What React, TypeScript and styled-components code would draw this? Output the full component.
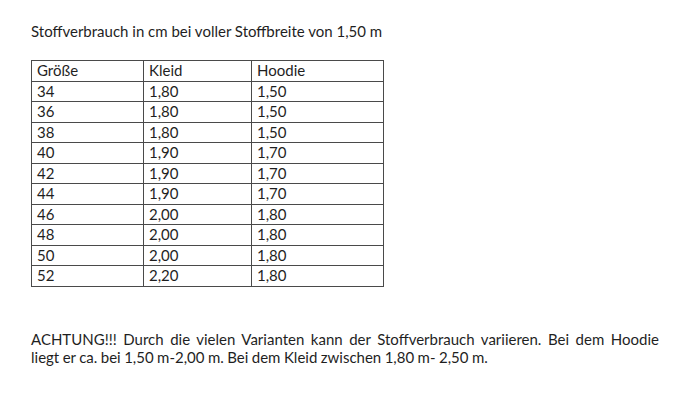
import React from 'react';
import styled, { createGlobalStyle } from 'styled-components';

const GlobalStyle = createGlobalStyle`
    html, body {
        margin: 0;
        padding: 0;
        background: #ffffff;
    }
`;

const Page = styled.div`
    width: 680px;
    height: 409px;
    box-sizing: border-box;
    padding: 22px 0 0 31px;
    font-family: Lato, "Noto Sans", sans-serif;
    font-size: 15px;
    line-height: 19px;
    color: #1f1f1f;
`;

const Title = styled.div`
    margin: 0 0 19px 0;
`;

const Table = styled.table`
    border-collapse: collapse;
    width: 352px;
    table-layout: fixed;
`;

const Col = styled.col<{ $width: number }>`
    width: ${p => p.$width}px;
`;

const Cell = styled.td`
    border: 1px solid #4a4a4a;
    padding: 0 0 0 5px;
    height: 19.5px;
    line-height: 19px;
    text-align: left;
    vertical-align: middle;
`;

const Note = styled.div`
    margin: 43px 0 0 0;
    white-space: nowrap;
    line-height: 18.5px;
`;

const NoteLine = styled.div<{ $wordSpacing: number }>`
    word-spacing: ${p => p.$wordSpacing}px;
`;

const rows = [
    ['34', '1,80', '1,50'],
    ['36', '1,80', '1,50'],
    ['38', '1,80', '1,50'],
    ['40', '1,90', '1,70'],
    ['42', '1,90', '1,70'],
    ['44', '1,90', '1,70'],
    ['46', '2,00', '1,80'],
    ['48', '2,00', '1,80'],
    ['50', '2,00', '1,80'],
    ['52', '2,20', '1,80'],
];

const App = () => {
    return (
        <>
            <GlobalStyle />
            <Page>
                <Title>Stoffverbrauch in cm bei voller Stoffbreite von 1,50 m</Title>
                <Table>
                    <colgroup>
                        <Col $width={112} />
                        <Col $width={108} />
                        <Col $width={132} />
                    </colgroup>
                    <tbody>
                        <tr>
                            <Cell>Größe</Cell>
                            <Cell>Kleid</Cell>
                            <Cell>Hoodie</Cell>
                        </tr>
                        {rows.map(r => (
                            <tr key={r[0]}>
                                <Cell>{r[0]}</Cell>
                                <Cell>{r[1]}</Cell>
                                <Cell>{r[2]}</Cell>
                            </tr>
                        ))}
                    </tbody>
                </Table>
                <Note>
                    <NoteLine $wordSpacing={2.7}>
                        ACHTUNG!!! Durch die vielen Varianten kann der Stoffverbrauch variieren. Bei dem Hoodie
                    </NoteLine>
                    <NoteLine $wordSpacing={-0.4}>
                        liegt er ca. bei 1,50 m-2,00 m. Bei dem Kleid zwischen 1,80 m- 2,50 m.
                    </NoteLine>
                </Note>
            </Page>
        </>
    );
};

export default App;
